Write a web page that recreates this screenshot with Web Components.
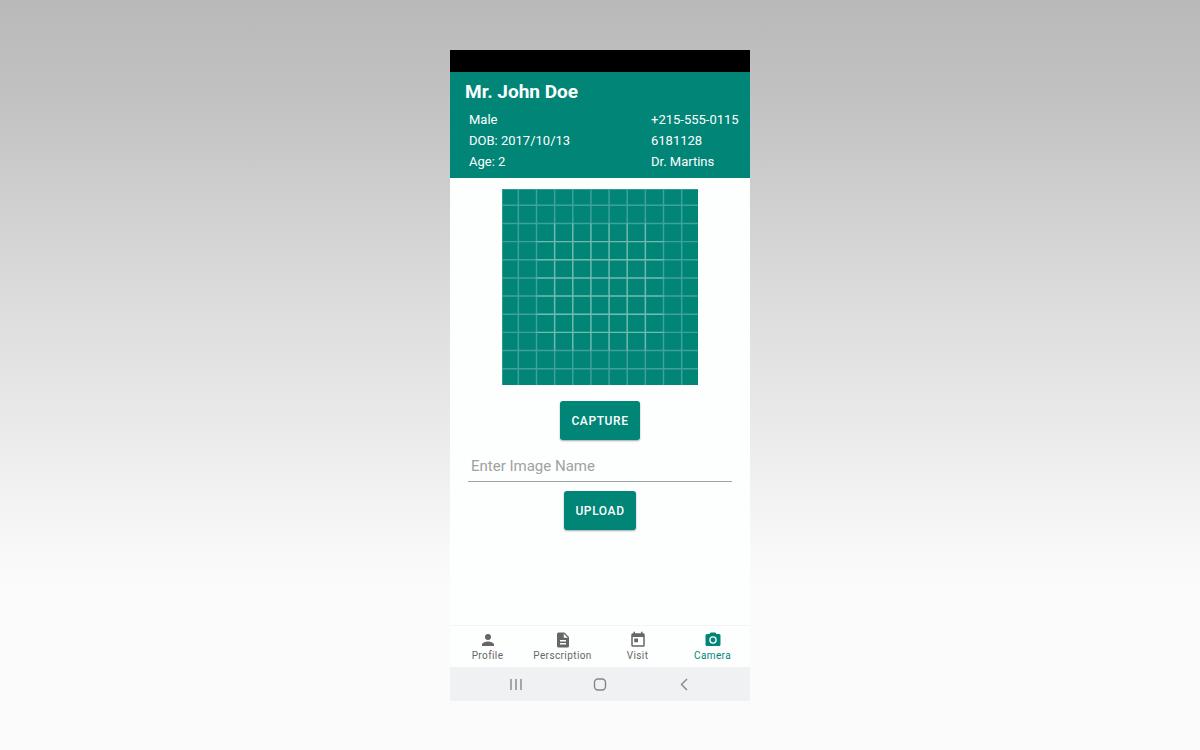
<!DOCTYPE html>
<html lang="en">
<head>
<meta charset="utf-8">
<meta name="viewport" content="width=device-width, initial-scale=1">
<title>Patient camera</title>
<style>
  html { min-height: 100%; }
  body {
    margin: 0;
    min-height: 100vh;
    box-sizing: border-box;
    padding: 50px 16px 49px;
    display: flex;
    justify-content: center;
    font-family: Roboto, "Liberation Sans", sans-serif;
    background: linear-gradient(#b9b9b9 0%, #c1c1c1 12%, #dcdcdc 40%, #ebebeb 58%, #f9f9f9 74%, #fbfbfb 80%, #fbfbfb 100%);
    --brand: #008577;
  }
</style>
</head>
<body>
<phone-screen>
  <patient-header slot="header">
    <span slot="name">Mr. John Doe</span>
    <span slot="sex">Male</span>
    <span slot="phone">+215-555-0115</span>
    <span slot="dob">DOB: 2017/10/13</span>
    <span slot="record">6181128</span>
    <span slot="age">Age: 2</span>
    <span slot="doctor">Dr. Martins</span>
  </patient-header>
  <capture-form></capture-form>
  <tab-bar slot="footer">
    <tab-item icon="person" href="#profile">Profile</tab-item>
    <tab-item icon="document" href="#perscription">Perscription</tab-item>
    <tab-item icon="event" href="#visit">Visit</tab-item>
    <tab-item icon="camera" href="#camera" active>Camera</tab-item>
  </tab-bar>
  <system-bar slot="footer"></system-bar>
</phone-screen>
<script>
class BaseElement extends HTMLElement {
  constructor() {
    super();
    this.attachShadow({ mode: "open" });
  }
  connectedCallback() {
    const template = document.createElement("template");
    template.innerHTML = this.render();
    this.shadowRoot.replaceChildren(template.content.cloneNode(true));
  }
}

customElements.define("phone-screen", class extends BaseElement {
  render() {
    return `<style>
      :host { display: flex; flex-direction: column; width: 100%; max-width: 300px; background: #fdfefe; }
      .status { height: 22px; background: #000; }
      main { flex: 1; display: flex; flex-direction: column; }
    </style>
    <div class="status"></div>
    <slot name="header"></slot>
    <main><slot></slot></main>
    <slot name="footer"></slot>`;
  }
});

customElements.define("patient-header", class extends BaseElement {
  render() {
    return `<style>
      :host { display: block; background: var(--brand); color: #fff; padding: 8px 12px 6px 15px; }
      h1 { margin: 0 0 5px; font-size: 19px; line-height: 24px; font-weight: 700; }
      .facts { display: grid; grid-template-columns: 1fr 87px; padding-left: 4px; font-size: 13px; line-height: 21px; white-space: nowrap; }
    </style>
    <h1><slot name="name"></slot></h1>
    <div class="facts">
      <slot name="sex"></slot><slot name="phone"></slot>
      <slot name="dob"></slot><slot name="record"></slot>
      <slot name="age"></slot><slot name="doctor"></slot>
    </div>`;
  }
});

customElements.define("image-preview", class extends BaseElement {
  render() {
    const outer = [0, 9, 19, 29, 39, 49, 59, 69, 79, 89, 99].map(n => `M${n} 0V108M0 ${n}H108`).join("");
    const inner = [29, 39, 49, 59, 69, 79].map(n => `M${n} 19V89M19 ${n}H89`).join("");
    return `<style>
      :host { display: block; width: 196px; }
      svg { display: block; width: 100%; background: var(--brand); }
    </style>
    <svg viewBox="0 0 108 108" fill="none" stroke="#fff" stroke-opacity=".25" stroke-width=".8" aria-hidden="true">
      <path d="${outer}"/><path d="${inner}"/>
    </svg>`;
  }
});

customElements.define("action-button", class extends BaseElement {
  render() {
    return `<style>
      :host { display: block; }
      button { display: block; height: 39px; padding: 1px 11px 0; border: 0; border-radius: 3px; background: var(--brand); color: #fff;
        font: 500 12px/16px Roboto, "Liberation Sans", sans-serif; letter-spacing: .05em; box-shadow: 0 1px 2px rgba(0,0,0,.35); }
    </style>
    <button type="button"><slot></slot></button>`;
  }
});

customElements.define("capture-form", class extends BaseElement {
  render() {
    return `<style>
      :host { display: flex; flex-direction: column; align-items: center; padding: 11px 18px; }
      .capture { margin-top: 16px; }
      input { box-sizing: border-box; width: 100%; height: 31px; margin: 11px 0 9px; padding: 0 3px; border: 0; border-bottom: 1px solid #9da3a1;
        border-radius: 0; outline: 0; background: none; font: 15px/20px Roboto, "Liberation Sans", sans-serif; color: #333; }
      input::placeholder { color: #a0a2a1; opacity: 1; }
    </style>
    <image-preview></image-preview>
    <action-button class="capture">CAPTURE</action-button>
    <input type="text" placeholder="Enter Image Name" aria-label="Image name">
    <action-button>UPLOAD</action-button>`;
  }
});

customElements.define("tab-bar", class extends BaseElement {
  render() {
    return `<style>
      :host { display: block; border-top: 1px solid #f3f5f4; }
      nav { display: grid; grid-template-columns: repeat(4, 1fr); }
    </style>
    <nav aria-label="Sections"><slot></slot></nav>`;
  }
});

const TAB_ICONS = {
  person: "M12 12a4 4 0 1 0 0-8 4 4 0 0 0 0 8zm0 2c-2.670 0-8 1.340-8 4v2h16v-2c0-2.660-5.330-4-8-4z",
  document: "M14 2H6a2 2 0 0 0-2 2v16a2 2 0 0 0 2 2h12a2 2 0 0 0 2-2V8l-6-6zm2 16H8v-2h8v2zm0-4H8v-2h8v2zm-3-5V3.500L18.500 9H13z",
  event: "M19 3h-1V1h-2v2H8V1H6v2H5a2 2 0 0 0-2 2v14a2 2 0 0 0 2 2h14a2 2 0 0 0 2-2V5a2 2 0 0 0-2-2zm0 16H5V8h14v11zM7 10h5v5H7z",
  camera: "M9 2 7.170 4H4a2 2 0 0 0-2 2v12a2 2 0 0 0 2 2h16a2 2 0 0 0 2-2V6a2 2 0 0 0-2-2h-3.170L15 2H9zM12 17a5 5 0 1 1 0-10 5 5 0 0 1 0 10zM12 15.200a3.200 3.200 0 1 0 0-6.400 3.200 3.200 0 0 0 0 6.400z"
};

customElements.define("tab-item", class extends BaseElement {
  render() {
    const active = this.hasAttribute("active");
    return `<style>
      :host { display: block; color: #666; }
      :host([active]) { color: var(--brand); }
      a { display: flex; flex-direction: column; align-items: center; padding: 5px 0 4px; color: inherit; text-decoration: none;
        font-size: 10px; line-height: 14px; letter-spacing: .04em; }
      svg { width: 18px; height: 18px; fill: currentColor; }
    </style>
    <a href="${this.getAttribute("href")}"${active ? ' aria-current="page"' : ""}>
      <svg viewBox="0 0 24 24" fill-rule="evenodd" aria-hidden="true"><path d="${TAB_ICONS[this.getAttribute("icon")]}"/></svg>
      <slot></slot>
    </a>`;
  }
});

customElements.define("system-bar", class extends BaseElement {
  render() {
    return `<style>
      :host { display: flex; justify-content: center; gap: 68px; padding: 9px 0; background: #f0f1f3; }
      button { display: block; width: 16px; height: 16px; padding: 0; border: 0; background: none; color: #84868a; }
      svg { display: block; width: 16px; height: 16px; fill: none; stroke: currentColor; stroke-width: 1.400; }
    </style>
    <button type="button" aria-label="Recent apps"><svg viewBox="0 0 16 16"><path d="M3 3v11M8 3v11M13 3v11"/></svg></button>
    <button type="button" aria-label="Home"><svg viewBox="0 0 16 16"><rect x="2.500" y="3" width="11" height="11" rx="3.500"/></svg></button>
    <button type="button" aria-label="Back"><svg viewBox="0 0 16 16"><path d="M11 3 5.500 8.500 11 14"/></svg></button>`;
  }
});
</script>
</body>
</html>
